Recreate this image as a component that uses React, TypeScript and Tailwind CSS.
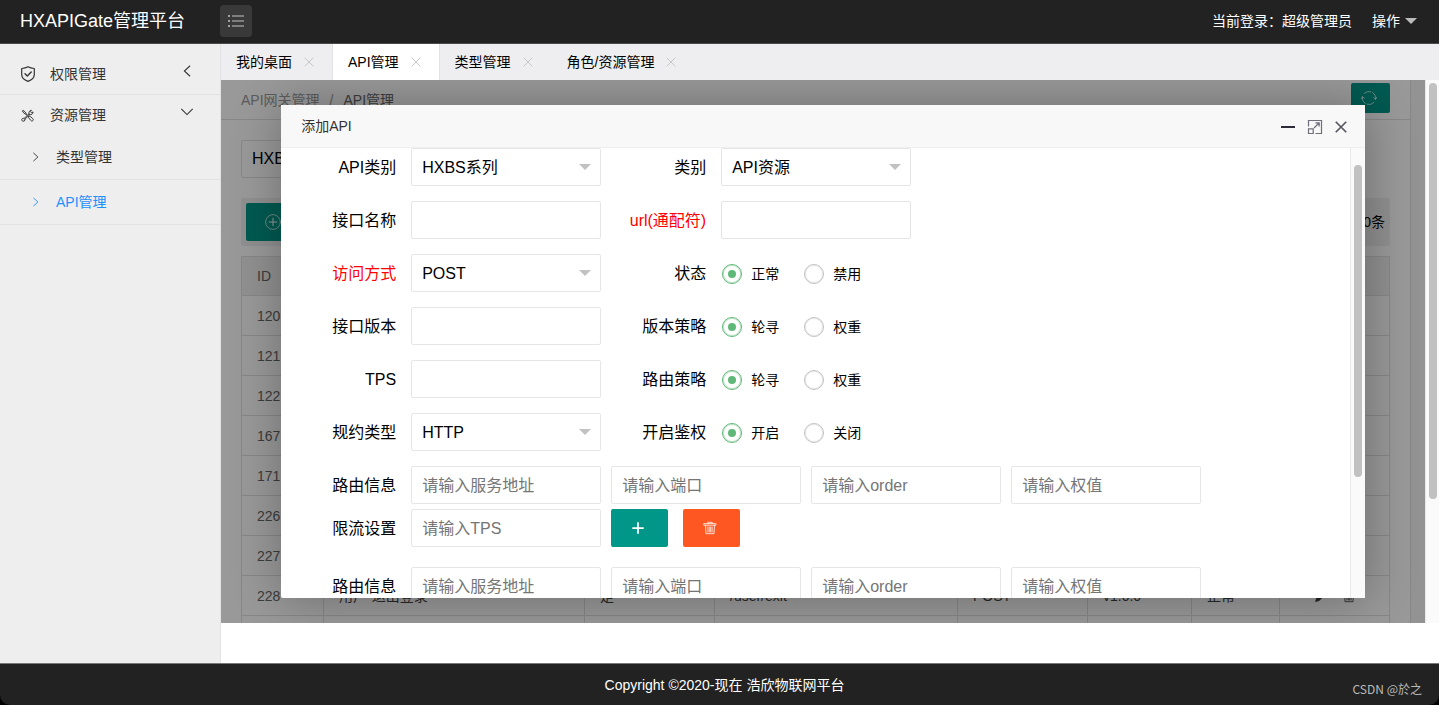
import type { ReactNode, SVGProps } from "react";

const FONT =
  "font-['Liberation_Sans','Noto_Sans_CJK_SC',sans-serif]";

/* ---------- icons ---------- */

function Icon({ children, ...rest }: SVGProps<SVGSVGElement> & { children: ReactNode }) {
  return (
    <svg
      viewBox="0 0 16 16"
      width="16"
      height="16"
      fill="none"
      stroke="currentColor"
      strokeLinecap="round"
      strokeLinejoin="round"
      aria-hidden="true"
      {...rest}
    >
      {children}
    </svg>
  );
}

const ListIcon = () => (
  <Icon strokeLinecap="butt">
    <path d="M0 3h2M0 8h2M0 13h2" strokeWidth="1.3" />
    <path d="M4 3h12M4 8h12M4 13h12" strokeWidth="1.1" />
  </Icon>
);

const ShieldIcon = () => (
  <Icon strokeWidth="1.2">
    <path d="M8 .8c2 1.3 4 1.600 6.300 1.700v6c0 3-2.300 5.400-6.300 6.900C4 13.900 1.700 11.500 1.700 8.500v-6C4 2.400 6 2.100 8 .8z" />
    <path d="M5 7.700l2.300 2.300 3.900-3.900" strokeWidth="1.400" />
  </Icon>
);

const ToolsIcon = () => (
  <Icon width="13" height="13" strokeWidth="1.200">
    <path d="M6.900 7.200L3.300 4.800 1.600 2.300l.7-.7 2.500 1.700 2.400 3.600" />
    <path d="M9.600 8.800l1.500.2 3.300 2.700c.9 1 .9 2 .2 2.600-.8.700-1.800.6-2.600-.3L9.400 10.700z" />
    <path d="M3.900 14.700c-.9.700-2.200.4-2.700-.5-.6-1-.2-2.200.8-2.600.9-.4 1.700-.1 2.100.5M3.900 11.600L9.800 5.900M4.900 12.600L10.700 6.900M4.900 12.600c.3.800-.1 1.600-1 2.100" />
    <path d="M9.800 5.900c-.6-2 .8-4.200 3-4.300l-1.100 1.700 1.200 1.300 1.900-1c.2 2.300-1.900 4-4.100 3.300" />
  </Icon>
);

const ChevronIcon = ({ dir, size }: { dir: "left" | "down" | "right"; size: number }) => (
  <Icon width={size} height={size} strokeWidth="1.200" strokeLinecap="butt" strokeLinejoin="miter">
    {dir === "left" && <path d="M11.500 2L5 8l6.500 6" />}
    {dir === "down" && <path d="M1.500 4.500L8 11l6.500-6.500" />}
    {dir === "right" && <path d="M4.500 2.500l6 5.500-6 5.500" />}
  </Icon>
);

const CrossIcon = ({ size, width }: { size: number; width: number }) => (
  <Icon width={size} height={size} strokeWidth={width} strokeLinecap="butt">
    <path d="M1 1l14 14M15 1L1 15" />
  </Icon>
);

const CaretIcon = () => (
  <svg viewBox="0 0 12 6" width="12" height="6" fill="currentColor" aria-hidden="true">
    <path d="M0 0h12L6 6z" />
  </svg>
);

const RefreshIcon = () => (
  <Icon strokeWidth="0.700">
    <path d="M3.200 3.400A6.600 6.600 0 0 1 9.800 1.700M11.600 2.500A6.600 6.600 0 0 1 14.500 9M12.800 12.600a6.600 6.600 0 0 1-6.600 1.700M4.400 13.500A6.600 6.600 0 0 1 1.500 7" />
    <path d="M.3 8.700L1.500 6.600l1.800 1.600M15.700 7.300L14.500 9.400l-1.800-1.600" />
  </Icon>
);

const PlusCircleIcon = () => (
  <Icon strokeWidth="0.700">
    <circle cx="8" cy="8" r="7.400" />
    <path d="M8 4.200v7.600M4.200 8h7.600" strokeWidth="1" />
  </Icon>
);

const PlusIcon = () => (
  <Icon width="14" height="14" strokeWidth="2" strokeLinecap="butt">
    <path d="M8 1.500v13M1.500 8h13" />
  </Icon>
);

const TrashIcon = ({ size }: { size: number }) => (
  <Icon width={size} height={size} strokeWidth="0.900">
    <path d="M1.300 3h13.400v1.800H1.300zM5.500 2.800V1.500h5v1.300M2.900 5l.5 9.500h9.200l.5-9.500M5.600 6.800v5.800M7.200 6.800v5.800M8.800 6.800v5.800M10.400 6.800v5.800" />
  </Icon>
);

const PencilIcon = () => (
  <Icon width="14" height="14" fill="currentColor" strokeWidth="0.800">
    <path d="M2 14l1-4 8.500-8.500 3 3L6 13z" />
  </Icon>
);

const MaximizeIcon = () => (
  <Icon strokeWidth="1.200" strokeLinecap="butt" strokeLinejoin="miter">
    <path d="M1.500 7.500v-6h13v13H8.500M1.500 9.800h4.700v4.700H1.500zM7 9l5-5M8.500 3.800h3.700v3.700" />
  </Icon>
);

/* ---------- shell ---------- */

function Header() {
  return (
    <header className="flex h-11 shrink-0 items-center border-b border-[#4a4a4a] bg-[#222] pb-px text-white">
      <h1 className="w-[220px] shrink-0 pl-5 text-lg">HXAPIGate管理平台</h1>
      <button
        type="button"
        aria-label="菜单"
        className="flex size-8 items-center justify-center rounded-sm bg-[#393939] text-[#c4c4c4]"
      >
        <ListIcon />
      </button>
      <div className="ml-auto flex items-center gap-5 pr-[22px] text-sm">
        <span>当前登录：超级管理员</span>
        <button type="button" className="flex items-center gap-[5px]">
          操作
          <span className="text-[#bcbcbc]">
            <CaretIcon />
          </span>
        </button>
      </div>
    </header>
  );
}

function Sidebar() {
  return (
    <nav className="w-[221px] shrink-0 border-r border-[#e2e2e2] bg-[#eee] text-sm text-[#333]">
      <a href="#auth" className="flex h-[51px] items-center border-b border-[#e2e2e2] pt-[10px] pr-[26px] pl-5">
        <ShieldIcon />
        <span className="ml-[14px] flex-1">权限管理</span>
        <span className="pb-[6px]">
          <ChevronIcon dir="left" size={14} />
        </span>
      </a>
      <a href="#resource" className="flex h-10 items-center pr-[26px] pl-[21px]">
        <ToolsIcon />
        <span className="ml-[16px] flex-1">资源管理</span>
        <span className="pb-[6px]">
          <ChevronIcon dir="down" size={14} />
        </span>
      </a>
      <a href="#type" className="flex h-[45px] items-center gap-[14px] border-b border-[#e2e2e2] pl-[30px]">
        <ChevronIcon dir="right" size={12} />
        类型管理
      </a>
      <a href="#api" className="flex h-[45px] items-center gap-[14px] border-b border-[#e2e2e2] pl-[30px] text-[#1e90ff]">
        <ChevronIcon dir="right" size={12} />
        API管理
      </a>
    </nav>
  );
}

const TABS = ["我的桌面", "API管理", "类型管理", "角色/资源管理"];

function TabBar() {
  return (
    <div className="flex h-9 shrink-0 bg-[#eeeef0] text-sm text-black">
      {TABS.map((t, i) => (
        <div
          key={t}
          className={
            "flex items-center gap-3 border-r pr-[18px] pl-[15px] " +
            (i === 1 ? "border-[#e2e2e2] bg-white" : i === 0 ? "border-[#e2e2e2]" : "border-transparent")
          }
        >
          <a href={"#tab" + i}>{t}</a>
          <button type="button" aria-label={"关闭" + t} className="text-[#c4c4c4]">
            <CrossIcon size={10} width={1.5} />
          </button>
        </div>
      ))}
    </div>
  );
}

/* ---------- page behind the dialog ---------- */

const EMPTY = ["", "", "", "", "", ""];
const ROWS: { id: string; cells: string[] }[] = [
  { id: "120", cells: EMPTY },
  { id: "121", cells: EMPTY },
  { id: "122", cells: EMPTY },
  { id: "167", cells: EMPTY },
  { id: "171", cells: EMPTY },
  { id: "226", cells: EMPTY },
  { id: "227", cells: EMPTY },
  { id: "228", cells: ["用户-退出登录", "是", "/user/exit", "POST", "v1.0.0", "正常"] },
];

function ListPage() {
  return (
    <div className="min-w-0 flex-1 border-r border-[#e2e2e2] bg-white">
      <div className="flex h-10 items-center justify-between border-b border-[#e2e2e2] px-5 text-sm">
        <div className="flex gap-[10px] text-[#999]">
          <a href="#gateway">API网关管理</a>
          <span>/</span>
          <a href="#list" className="text-[#666]">API管理</a>
        </div>
        <button
          type="button"
          aria-label="刷新"
          className="mb-1 flex h-[30px] w-[39px] items-center justify-center rounded-[2px] bg-[#009688] pr-[3px] text-white"
        >
          <RefreshIcon />
        </button>
      </div>
      <div className="p-5">
        <select
          aria-label="系列"
          className="block h-[38px] w-[190px] appearance-none rounded-[2px] border border-[#e2e2e2] bg-white px-[10px] text-base text-black"
        >
          <option>HXBS系列</option>
        </select>
        <div className="mt-5 flex h-12 items-center justify-between rounded-[2px] bg-[#f0f0f0] px-[5px]">
          <button
            type="button"
            aria-label="添加"
            className="flex h-[38px] w-[90px] items-center rounded-[2px] bg-[#009688] pl-[19px] text-white"
          >
            <PlusCircleIcon />
          </button>
          <span className="text-sm text-black">10条</span>
        </div>
        <table className="mt-[10px] w-full table-fixed border-collapse text-left text-sm text-[#666] [&_td]:border [&_td]:border-[#e2e2e2] [&_td]:px-[15px] [&_th]:border [&_th]:border-[#e2e2e2] [&_th]:px-[15px] [&_th]:font-normal">
          <colgroup>
            <col className="w-[82px]" />
            <col />
            <col className="w-[130px]" />
            <col className="w-[243px]" />
            <col className="w-[130px]" />
            <col className="w-[104px]" />
            <col className="w-[88px]" />
            <col className="w-[110px]" />
          </colgroup>
          <thead>
            <tr className="h-[39px] bg-[#f2f2f2]">
              <th>ID</th>
              {EMPTY.map((_, i) => (
                <th key={i} />
              ))}
              <th />
            </tr>
          </thead>
          <tbody>
            {ROWS.map((r) => (
              <tr key={r.id} className="h-10">
                <td>{r.id}</td>
                {r.cells.map((c, i) => (
                  <td key={i} className="whitespace-nowrap text-[#444]">{c}</td>
                ))}
                <td>
                  <div className="flex justify-center gap-[14px] text-[#333]">
                    <button type="button" aria-label="编辑">
                      <PencilIcon />
                    </button>
                    <button type="button" aria-label="删除">
                      <TrashIcon size={14} />
                    </button>
                  </div>
                </td>
              </tr>
            ))}
            <tr className="h-10">
              <td />
              {EMPTY.map((_, i) => (
                <td key={i} />
              ))}
              <td />
            </tr>
          </tbody>
        </table>
      </div>
    </div>
  );
}

/* ---------- dialog ---------- */

const BOX =
  "h-[38px] w-[190px] shrink-0 appearance-none rounded-[2px] border border-[#e6e6e6] bg-white px-[10px] pt-px text-base text-black outline-none placeholder:text-[#757575]";

function Label({ text, id, second, red }: { text: string; id?: string; second?: boolean; red?: boolean }) {
  return (
    <label
      htmlFor={id}
      className={
        "shrink-0 pt-px pr-[15px] text-right text-base " +
        (second ? "w-[120px] " : "w-[130px] ") +
        (red ? "text-[#f00]" : "text-black")
      }
    >
      {text}
    </label>
  );
}

function SelectBox({ id, value }: { id: string; value: string }) {
  return (
    <div className="grid shrink-0 items-center">
      <select id={id} className={"col-start-1 row-start-1 " + BOX}>
        <option>{value}</option>
      </select>
      <span className="pointer-events-none col-start-1 row-start-1 mr-[10px] justify-self-end text-[#c2c2c2]">
        <CaretIcon />
      </span>
    </div>
  );
}

function Radios({ name, options }: { name: string; options: string[] }) {
  return (
    <div className="flex gap-[25px] pt-px pl-px" role="radiogroup" aria-label={name}>
      {options.map((o, i) => (
        <label key={o} className="flex items-center gap-[9px] text-sm text-black">
          <input
            type="radio"
            name={name}
            defaultChecked={i === 0}
            className="grid size-5 appearance-none place-items-center rounded-full border border-[#c2c2c2] ring-1 ring-[#c2c2c2]/40 ring-inset before:size-2 before:rounded-full checked:border-[#5fb878] checked:ring-[#5fb878]/40 checked:before:bg-[#5fb878]"
          />
          {o}
        </label>
      ))}
    </div>
  );
}

function Row({ children }: { children: ReactNode }) {
  return <div className="mb-[15px] flex items-center">{children}</div>;
}

function RouteBlock({ n }: { n: number }) {
  return (
    <div className="mb-5">
      <div className="mb-[5px] flex items-center">
        <Label text="路由信息" id={"addr" + n} />
        <div className="flex gap-[10px]">
          <input id={"addr" + n} className={BOX} placeholder="请输入服务地址" />
          <input aria-label="端口" className={BOX} placeholder="请输入端口" />
          <input aria-label="order" className={BOX} placeholder="请输入order" />
          <input aria-label="权值" className={BOX} placeholder="请输入权值" />
        </div>
      </div>
      <div className="flex items-center">
        <Label text="限流设置" id={"limit" + n} />
        <input id={"limit" + n} className={BOX} placeholder="请输入TPS" />
        <button
          type="button"
          aria-label="添加路由"
          className="ml-[10px] flex h-[38px] w-[57px] items-center justify-center rounded-[2px] bg-[#009688] pr-[3px] text-white"
        >
          <PlusIcon />
        </button>
        <button
          type="button"
          aria-label="删除路由"
          className="ml-[15px] flex h-[38px] w-[57px] items-center justify-center rounded-[2px] bg-[#ff5722] pr-[3px] text-white"
        >
          <TrashIcon size={14} />
        </button>
      </div>
    </div>
  );
}

function Dialog() {
  return (
    <section
      role="dialog"
      aria-label="添加API"
      className="absolute inset-x-[5%] inset-y-[25px] flex flex-col rounded-[2px] bg-white shadow-[1px_1px_50px_rgba(0,0,0,0.3)]"
    >
      <div className="flex h-[43px] shrink-0 items-center border-b border-[#eee] bg-[#f8f8f8] pr-[18px] pl-5 text-[#2e2d3c]">
        <h2 className="flex-1 text-sm text-[#333]">添加API</h2>
        <div className="flex items-center gap-3 pt-[2px]">
          <button type="button" aria-label="最小化" className="flex h-4 w-[14px] items-center">
            <span className="h-[2px] w-full bg-current" />
          </button>
          <button type="button" aria-label="最大化" className="text-[#6f6e7a]">
            <MaximizeIcon />
          </button>
          <button type="button" aria-label="关闭" className="text-[#55545f]">
            <CrossIcon size={12} width={2.2} />
          </button>
        </div>
      </div>
      <div className="flex min-h-0 flex-1">
        <form className="min-w-0 flex-1 overflow-hidden">
          <Row>
            <Label text="API类别" id="series" />
            <SelectBox id="series" value="HXBS系列" />
            <Label text="类别" id="kind" second />
            <SelectBox id="kind" value="API资源" />
          </Row>
          <Row>
            <Label text="接口名称" id="name" />
            <input id="name" className={BOX} />
            <Label text="url(通配符)" id="url" second red />
            <input id="url" className={BOX} />
          </Row>
          <Row>
            <Label text="访问方式" id="method" red />
            <SelectBox id="method" value="POST" />
            <Label text="状态" second />
            <Radios name="状态" options={["正常", "禁用"]} />
          </Row>
          <Row>
            <Label text="接口版本" id="version" />
            <input id="version" className={BOX} />
            <Label text="版本策略" second />
            <Radios name="版本策略" options={["轮寻", "权重"]} />
          </Row>
          <Row>
            <Label text="TPS" id="tps" />
            <input id="tps" className={BOX} />
            <Label text="路由策略" second />
            <Radios name="路由策略" options={["轮寻", "权重"]} />
          </Row>
          <Row>
            <Label text="规约类型" id="protocol" />
            <SelectBox id="protocol" value="HTTP" />
            <Label text="开启鉴权" second />
            <Radios name="开启鉴权" options={["开启", "关闭"]} />
          </Row>
          <RouteBlock n={1} />
          <RouteBlock n={2} />
        </form>
        <div className="w-[15px] shrink-0 border-l border-[#e8e8e8] bg-[#fafafa] pt-[17px] pl-[3px]">
          <div className="h-[72%] w-2 rounded-full bg-[#c1c1c1]" />
        </div>
      </div>
    </section>
  );
}

export default function App() {
  return (
    <div className={"flex h-screen flex-col bg-black " + FONT}>
      <Header />
      <div className="flex min-h-0 flex-1 bg-white">
        <Sidebar />
        <main className="flex min-w-0 flex-1 flex-col pb-10">
          <TabBar />
          <div className="flex min-h-0 flex-1">
            <div className="relative flex min-w-0 flex-1 overflow-hidden bg-[#f6f6f6] pr-[14px]">
              <ListPage />
              <div className="absolute inset-0 bg-black/40" />
              <Dialog />
            </div>
            <div className="w-[14px] shrink-0 border-l border-[#e8e8e8] bg-[#fafafa] pt-[3px] pl-[3px]">
              <div className="h-[77%] w-2 rounded-full bg-[#c1c1c1]" />
            </div>
          </div>
        </main>
      </div>
      <footer className="relative flex h-[42px] shrink-0 items-center justify-center rounded-b-[10px] border-t border-[#777] bg-[#222] pl-[10px] text-sm text-white">
        Copyright ©2020-现在 浩欣物联网平台
        <span className="absolute right-[17px] bottom-2 font-['Noto_Sans_CJK_SC',sans-serif] text-xs text-[#bbb]">
          CSDN @於之
        </span>
      </footer>
    </div>
  );
}
